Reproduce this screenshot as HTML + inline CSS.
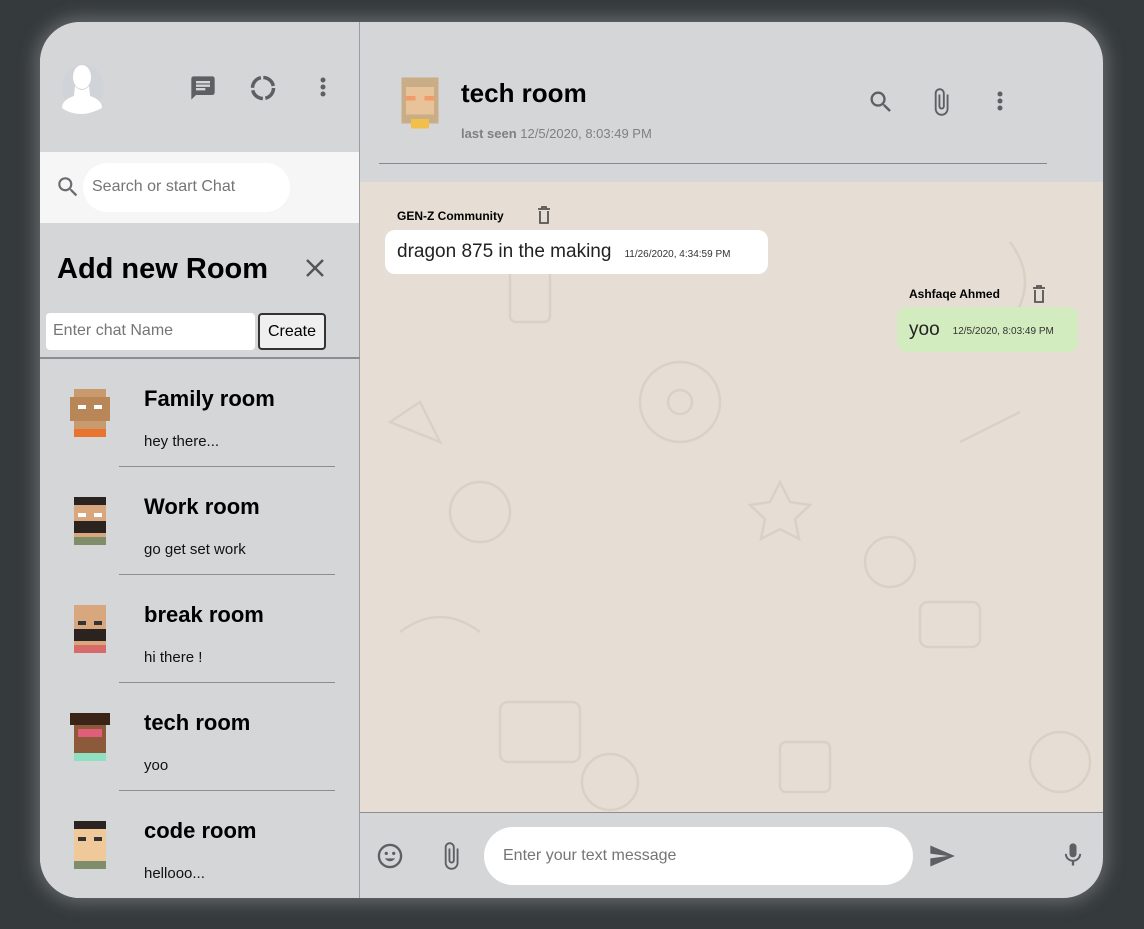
<!DOCTYPE html>
<html><head><meta charset="utf-8"><style>
*{box-sizing:border-box;margin:0;padding:0}
body{width:1144px;height:929px;background:#353a3d;font-family:"Liberation Sans",sans-serif;position:relative;overflow:hidden}
.app{position:absolute;left:40px;top:22px;width:1063px;height:876px;border-radius:40px;overflow:hidden;background:#d5d6d8;box-shadow:0 0 18px 4px rgba(200,200,200,.35)}
.side{position:absolute;left:0;top:0;width:320px;height:876px;border-right:1px solid #9a9ca0;background:#d5d6d8}
.abs{position:absolute;white-space:nowrap}
.room{position:absolute;left:0;width:320px;height:108px}
.room .name{position:absolute;left:104px;top:27px;font:bold 22px "Liberation Sans",sans-serif;color:#000}
.room .msg{position:absolute;left:104px;top:74px;font:15px "Liberation Sans",sans-serif;color:#111}
.room .line{position:absolute;left:79px;right:25px;bottom:0;border-bottom:1px solid #8b8d90}
.av{position:absolute;left:30px;top:30px;width:40px;height:48px}
.chat{position:absolute;left:320px;top:160px;width:743px;height:630px;background:#e6ded5}
.bub{position:absolute;border-radius:10px;padding:0 12px;display:flex;align-items:center;white-space:nowrap}
</style></head><body>
<div class="app">
<div class="side">
  <div class="abs" style="left:22px;top:42px;width:42px;height:48px;border-radius:50%;background:#d0d3d8"></div>
  <svg class="abs" style="left:20px;top:40px" width="44" height="52" viewBox="0 0 44 52"><ellipse cx="22" cy="15" rx="9" ry="12" fill="#fff"/><path d="M15 24 Q22 32 29 24 L30 34 Q42 38 42 46 Q30 52 22 52 Q10 52 2 46 Q2 38 14 34Z" fill="#fff"/></svg>
  <svg class="abs" style="left:149px;top:52px" width="28" height="28" viewBox="0 0 24 24"><path fill="#5d5f62" d="M20 2H4c-1.1 0-2 .9-2 2v18l4-4h14c1.1 0 2-.9 2-2V4c0-1.1-.9-2-2-2zM6 9h12v2H6V9zm8 5H6v-2h8v2zm4-6H6V6h12v2z"/></svg>
  <svg class="abs" style="left:209px;top:52px" width="28" height="28" viewBox="0 0 28 28"><circle cx="14" cy="14" r="10.5" fill="none" stroke="#5d5f62" stroke-width="3.5" stroke-dasharray="14 2.5"/></svg>
  <svg class="abs" style="left:277px;top:54px" width="12" height="24"><circle cx="6" cy="4" r="2.5" fill="#5d5f62"/><circle cx="6" cy="11" r="2.5" fill="#5d5f62"/><circle cx="6" cy="18" r="2.5" fill="#5d5f62"/></svg>
  <div class="abs" style="left:0;top:130px;width:319px;height:71px;background:#f6f6f6"></div>
  <svg class="abs" style="left:15px;top:152px" width="26" height="26" viewBox="0 0 24 24"><path fill="#6a6c6f" d="M15.5 14h-.79l-.28-.27A6.47 6.47 0 0 0 16 9.5 6.5 6.5 0 1 0 9.5 16c1.61 0 3.09-.59 4.23-1.57l.27.28v.79l5 4.99L20.49 19l-4.99-5zm-6 0C7.01 14 5 11.99 5 9.5S7.01 5 9.5 5 14 7.01 14 9.5 11.99 14 9.5 14z"/></svg>
  <div class="abs" style="left:43px;top:141px;width:207px;height:49px;border-radius:25px;background:#fff;padding:15px 9px;font-size:16px;color:#757575">Search or start Chat</div>
  <div class="abs" style="left:17px;top:231px;font-size:29px;font-weight:bold;color:#000">Add new Room</div>
  <svg class="abs" style="left:265px;top:236px" width="20" height="20"><path d="M2 2L18 18M18 2L2 18" stroke="#555" stroke-width="2.4"/></svg>
  <div class="abs" style="left:6px;top:291px;width:209px;height:37px;background:#fff;border-radius:4px;padding:9px 7px;font-size:16px;color:#757575">Enter chat Name</div>
  <div class="abs" style="left:218px;top:291px;width:68px;height:37px;background:#efefef;border:2px solid #333;border-radius:4px;padding:8px 0;text-align:center;font-size:16px;color:#000">Create</div>
  <div class="abs" style="left:0;top:335px;width:320px;border-top:2px solid #8b8d90"></div>
  <div class="room" style="top:337px"><svg class="av" viewBox="0 0 10 12" shape-rendering="crispEdges"><rect x="1" y="0" width="8" height="11" fill="#c89a6e"/><rect x="0" y="2" width="10" height="6" fill="#b98757"/><rect x="2" y="4" width="2" height="1" fill="#fff"/><rect x="6" y="4" width="2" height="1" fill="#fff"/><rect x="1" y="10" width="8" height="2" fill="#e8742f"/></svg><div class="name">Family room</div><div class="msg">hey there...</div><div class="line"></div></div>
  <div class="room" style="top:445px"><svg class="av" viewBox="0 0 10 12" shape-rendering="crispEdges"><rect x="1" y="0" width="8" height="10" fill="#d8a77e"/><rect x="1" y="0" width="8" height="2" fill="#2a2320"/><rect x="1" y="6" width="8" height="3" fill="#2a2320"/><rect x="2" y="4" width="2" height="1" fill="#fff"/><rect x="6" y="4" width="2" height="1" fill="#fff"/><rect x="1" y="10" width="8" height="2" fill="#7f8d6a"/></svg><div class="name">Work room</div><div class="msg">go get set work</div><div class="line"></div></div>
  <div class="room" style="top:553px"><svg class="av" viewBox="0 0 10 12" shape-rendering="crispEdges"><rect x="1" y="0" width="8" height="10" fill="#d8a77e"/><rect x="1" y="6" width="8" height="3" fill="#2a2320"/><rect x="2" y="4" width="2" height="1" fill="#333"/><rect x="6" y="4" width="2" height="1" fill="#333"/><rect x="1" y="10" width="8" height="2" fill="#d96a6a"/></svg><div class="name">break room</div><div class="msg">hi there !</div><div class="line"></div></div>
  <div class="room" style="top:661px"><svg class="av" viewBox="0 0 10 12" shape-rendering="crispEdges"><rect x="1" y="0" width="8" height="10" fill="#8c5a3a"/><rect x="0" y="0" width="10" height="3" fill="#3a2418"/><rect x="2" y="4" width="6" height="2" fill="#e05e7a"/><rect x="1" y="10" width="8" height="2" fill="#8ee0c0"/></svg><div class="name">tech room</div><div class="msg">yoo</div><div class="line"></div></div>
  <div class="room" style="top:769px"><svg class="av" viewBox="0 0 10 12" shape-rendering="crispEdges"><rect x="1" y="0" width="8" height="10" fill="#f0c99a"/><rect x="1" y="0" width="8" height="2" fill="#2a2320"/><rect x="2" y="4" width="2" height="1" fill="#333"/><rect x="6" y="4" width="2" height="1" fill="#333"/><rect x="1" y="10" width="8" height="2" fill="#7f8d6a"/></svg><div class="name">code room</div><div class="msg">hellooo...</div></div>
</div>
<svg class="abs" style="left:357px;top:55px" width="46" height="52" viewBox="0 0 10 11" shape-rendering="crispEdges"><rect x="1" y="0" width="8" height="10" fill="#c8ad86"/><rect x="2" y="2" width="6" height="6" fill="#e8c39a"/><rect x="2" y="4" width="2" height="1" fill="#f29a6a"/><rect x="6" y="4" width="2" height="1" fill="#f29a6a"/><rect x="3" y="9" width="4" height="2" fill="#f2c04a"/></svg>
<div class="abs" style="left:421px;top:56px;font-size:26px;font-weight:bold;color:#000">tech room</div>
<div class="abs" style="left:421px;top:104px;font-size:13px;color:#808080"><b>last seen</b> 12/5/2020, 8:03:49 PM</div>
<svg class="abs" style="left:827px;top:66px" width="28" height="28" viewBox="0 0 24 24"><path fill="#5d5f62" d="M15.5 14h-.79l-.28-.27A6.47 6.47 0 0 0 16 9.5 6.5 6.5 0 1 0 9.5 16c1.61 0 3.09-.59 4.23-1.57l.27.28v.79l5 4.99L20.49 19l-4.99-5zm-6 0C7.01 14 5 11.99 5 9.5S7.01 5 9.5 5 14 7.01 14 9.5 11.99 14 9.5 14z"/></svg>
<svg class="abs" style="left:886px;top:64px" width="30" height="32" viewBox="0 0 24 24"><path fill="#5d5f62" d="M16.5 6v11.5c0 2.210-1.79 4-4 4s-4-1.79-4-4V5a2.5 2.5 0 0 1 5 0v10.5c0 .55-.45 1-1 1s-1-.45-1-1V6H10v9.5a2.5 2.5 0 0 0 5 0V5c0-2.21-1.79-4-4-4S7 2.79 7 5v12.5c0 3.04 2.46 5.5 5.5 5.5s5.5-2.46 5.5-5.5V6h-1.5z"/></svg>
<svg class="abs" style="left:954px;top:68px" width="12" height="24"><circle cx="6" cy="4" r="2.5" fill="#5d5f62"/><circle cx="6" cy="11" r="2.5" fill="#5d5f62"/><circle cx="6" cy="18" r="2.5" fill="#5d5f62"/></svg>
<div class="abs" style="left:339px;top:141px;width:668px;border-top:1px solid #85888c"></div>
<div class="chat">
  <svg class="abs" style="left:0;top:0" width="743" height="630" fill="none" stroke="#d9d0c6" stroke-width="2.5"><circle cx="120" cy="330" r="30"/><circle cx="320" cy="220" r="40"/><circle cx="320" cy="220" r="12"/><circle cx="530" cy="380" r="25"/><circle cx="250" cy="600" r="28"/><rect x="140" y="520" width="80" height="60" rx="8"/><rect x="560" y="420" width="60" height="45" rx="8"/><path d="M30 240 L60 220 L80 260 Z M420 300 l10 20 20 3 -15 14 4 20 -19-10 -19 10 4-20 -15-14 20-3z M650 60 q30 40 0 80 M40 450 q40 -30 80 0 M600 260 l60 -30"/><rect x="150" y="80" width="40" height="60" rx="6"/><circle cx="700" cy="580" r="30"/><rect x="420" y="560" width="50" height="50" rx="6"/></svg>
  <div class="abs" style="left:37px;top:27px;font-size:12px;font-weight:bold;color:#000">GEN-Z Community</div>
  <svg class="abs" style="left:177px;top:24px" width="14" height="18" viewBox="0 0 14 18"><path d="M1 3H13M5 3V1H9V3M3 5V17H11V5" fill="none" stroke="#555" stroke-width="1.8"/></svg>
  <div class="bub" style="left:25px;top:48px;width:383px;height:44px;background:#fff"><span style="font-size:19px;color:#222">dragon 875 in the making</span><span style="font-size:10px;color:#333;margin-left:13px;margin-top:4px">11/26/2020, 4:34:59 PM</span></div>
  <div class="abs" style="left:549px;top:105px;font-size:12px;font-weight:bold;color:#000">Ashfaqe Ahmed</div>
  <svg class="abs" style="left:672px;top:103px" width="14" height="18" viewBox="0 0 14 18"><path d="M1 3H13M5 3V1H9V3M3 5V17H11V5" fill="none" stroke="#555" stroke-width="1.8"/></svg>
  <div class="bub" style="left:537px;top:125px;width:181px;height:45px;background:#d2ecbf"><span style="font-size:19px;color:#222">yoo</span><span style="font-size:10px;color:#333;margin-left:13px;margin-top:4px">12/5/2020, 8:03:49 PM</span></div>
</div>
<div class="abs" style="left:320px;top:790px;width:743px;border-top:1px solid #8b8d90"></div>
<svg class="abs" style="left:336px;top:820px" width="28" height="28" viewBox="0 0 24 24"><circle cx="12" cy="12" r="9.5" fill="none" stroke="#5d5f62" stroke-width="2"/><circle cx="8.8" cy="9.8" r="1.4" fill="#5d5f62"/><circle cx="15.2" cy="9.8" r="1.4" fill="#5d5f62"/><path d="M7.5 14Q12 19 16.5 14Z" fill="#5d5f62"/></svg>
<svg class="abs" style="left:396px;top:818px" width="30" height="32" viewBox="0 0 24 24"><path fill="#5d5f62" d="M16.5 6v11.5c0 2.21-1.79 4-4 4s-4-1.79-4-4V5a2.5 2.5 0 0 1 5 0v10.5c0 .55-.45 1-1 1s-1-.45-1-1V6H10v9.5a2.5 2.5 0 0 0 5 0V5c0-2.21-1.79-4-4-4S7 2.79 7 5v12.5c0 3.04 2.46 5.5 5.5 5.5s5.5-2.46 5.5-5.5V6h-1.5z"/></svg>
<div class="abs" style="left:444px;top:805px;width:429px;height:58px;border-radius:29px;background:#fff;padding:20px 19px;font-size:16px;color:#757575">Enter your text message</div>
<svg class="abs" style="left:887px;top:820px" width="30" height="28" viewBox="0 0 24 24"><path fill="#5d5f62" d="M2.01 21L23 12 2.01 3 2 10l15 2-15 2z"/></svg>
<svg class="abs" style="left:1019px;top:818px" width="28" height="30" viewBox="0 0 24 24"><path fill="#5d5f62" d="M12 14c1.66 0 3-1.34 3-3V5c0-1.66-1.34-3-3-3S9 3.34 9 5v6c0 1.66 1.34 3 3 3zm5.3-3c0 3-2.54 5.1-5.3 5.1S6.7 14 6.7 11H5c0 3.41 2.72 6.23 6 6.72V21h2v-3.28c3.28-.48 6-3.3 6-6.72h-1.7z"/></svg>
</div>
</body></html>
